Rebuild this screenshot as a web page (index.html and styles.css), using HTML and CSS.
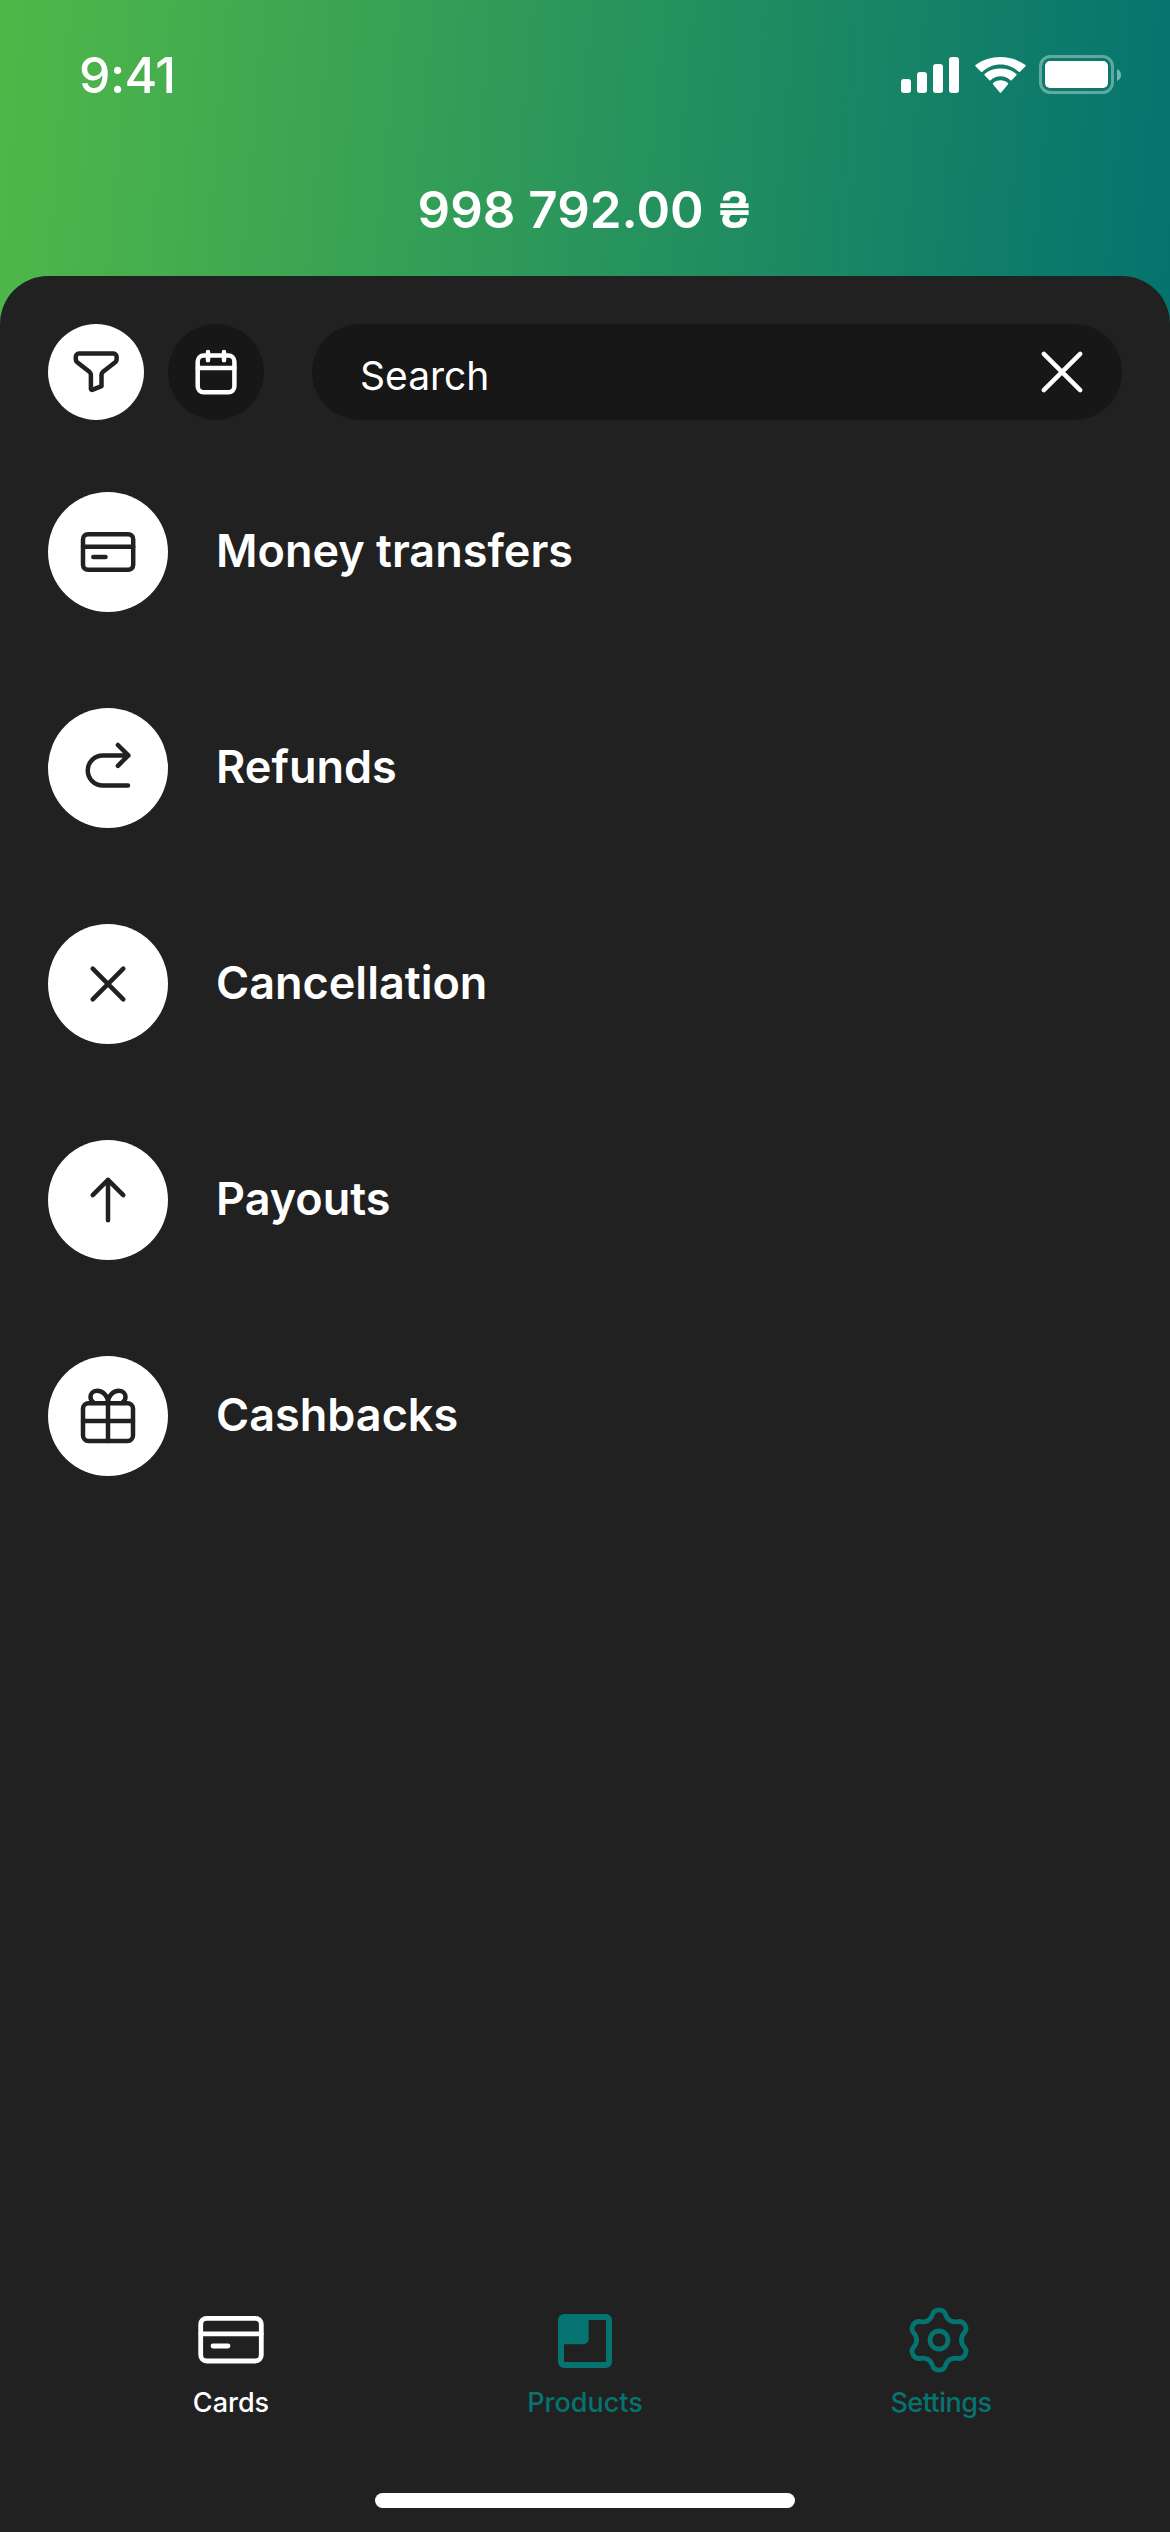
FILE: index.html
```html
<!DOCTYPE html>
<html lang="en">
<head>
<meta charset="utf-8">
<title>Products</title>
<link rel="stylesheet" href="styles.css">
</head>
<body>
<div class="screen">
  <header class="status-bar">
    <span class="time">9:41</span>
    <svg class="status-icons" width="222" height="40" viewBox="0 0 222 40" fill="#fff">
      <rect x="0" y="24" width="10" height="14" rx="3"/>
      <rect x="16" y="17" width="10" height="21" rx="3"/>
      <rect x="32" y="9" width="10" height="29" rx="3"/>
      <rect x="48" y="2" width="10" height="36" rx="3"/>
      <path d="M99.500 9.500c6.900 0 13.300 2.600 18.200 7.300.4.300.9.300 1.300 0l5.500-5.500c.4-.4.400-1 0-1.400C117.500 5 108.700 2 99.500 2S81.500 5 74.500 9.900c-.4.400-.4 1 0 1.400l5.500 5.500c.4.300.9.300 1.300 0 4.900-4.700 11.300-7.300 18.200-7.300z"/>
      <path d="M99.500 21.300c3.700 0 7.200 1.400 9.900 3.900.4.400 1 .4 1.300 0l4.700-4.900c.4-.4.400-1 0-1.400-4.300-3.700-9.900-5.500-15.900-5.500s-11.600 1.800-15.900 5.500c-.4.400-.4 1 0 1.400l4.700 4.900c.3.400.9.400 1.300 0 2.700-2.500 6.200-3.900 9.900-3.900z"/>
      <path d="M106.900 29.400c.4-.4.400-1 0-1.300-2-1.800-4.600-2.800-7.400-2.800s-5.400 1-7.400 2.800c-.4.300-.4.900 0 1.300l6.700 8c.4.400 1 .4 1.400 0z"/>
      <rect x="139.500" y="1.500" width="72" height="36" rx="10" fill="none" stroke="#fff" stroke-width="3" opacity=".36"/>
      <path d="M216 14v12c2.500-1 4-3.300 4-6s-1.500-5-4-6z" opacity=".45"/>
      <rect x="144" y="6" width="63" height="27" rx="5"/>
    </svg>
  </header>
  <h1 class="balance">998 792.00 ₴</h1>

  <main class="sheet">
    <div class="toolbar">
      <button class="tool tool-active" aria-label="Filter">
        <svg class="line" width="96" height="96" viewBox="0 0 96 96"><path d="M30.800 29.600h34.800a3 3 0 0 1 3 3v2.600a4 4 0 0 1-1.400 3.100L54.700 48.100a3.500 3.500 0 0 0-1.200 2.600v11.500l-9.200 3.600a1 1 0 0 1-1.400-.9V50.700a3.500 3.500 0 0 0-1.200-2.600L29.200 38.300a4 4 0 0 1-1.400-3.100v-2.600a3 3 0 0 1 3-3z"/></svg>
      </button>
      <button class="tool" aria-label="Calendar">
        <svg class="line" width="96" height="96" viewBox="0 0 96 96"><rect x="29.700" y="31.600" width="36.700" height="36.700" rx="6"/><path d="M29.700 44h36.700M40 28v8.300M56 28v8.300"/></svg>
      </button>
      <div class="search">
        <span>Search</span>
        <svg class="line" width="48" height="48" viewBox="0 0 48 48"><path d="M5.800 5.800l36.400 36.400M42.200 5.800L5.800 42.200"/></svg>
      </div>
    </div>

    <ul class="categories">
      <li class="category">
        <span class="badge"><svg class="line" width="120" height="120" viewBox="0 0 120 120"><rect x="35" y="42.200" width="50.200" height="35.600" rx="5"/><path d="M35 54.800h50.200M45.300 65h12.200"/></svg></span>
        <span class="name">Money transfers</span>
      </li>
      <li class="category">
        <span class="badge"><svg class="line" width="120" height="120" viewBox="0 0 120 120"><path d="M80 77.500H54.800a15.050 15.050 0 0 1 0-30.100h25.700M69.900 37l10.400 10.400-10.400 10.400"/></svg></span>
        <span class="name">Refunds</span>
      </li>
      <li class="category">
        <span class="badge"><svg class="line" width="120" height="120" viewBox="0 0 120 120"><path d="M44.700 44.700l30.600 30.600M75.300 44.700L44.700 75.300"/></svg></span>
        <span class="name">Cancellation</span>
      </li>
      <li class="category">
        <span class="badge"><svg class="line" width="120" height="120" viewBox="0 0 120 120"><path d="M60 80.300V39.800M44.700 55.200L60 39.900l15.300 15.300"/></svg></span>
        <span class="name">Payouts</span>
      </li>
      <li class="category">
        <span class="badge"><svg class="line" width="120" height="120" viewBox="0 0 120 120"><rect x="35" y="47.300" width="50" height="37.700" rx="5.500"/><path d="M35 65h50M60 46v39M60 46.500C60 40 55 34.800 49 34.800c-4.200 0-6.500 3-6.500 6.200 0 3 1.400 4.800 3.500 6M60 46.500c0-6.500 5-11.700 11-11.700 4.200 0 6.500 3 6.500 6.200 0 3-1.400 4.800-3.500 6"/></svg></span>
        <span class="name">Cashbacks</span>
      </li>
    </ul>

    <nav class="tabs">
      <a class="tab tab-active">
        <svg class="tab-line" width="72" height="72" viewBox="0 0 72 72"><rect x="5.700" y="14.300" width="60.600" height="42.700" rx="6"/><path d="M5.700 29.800h60.600M18 42h15"/></svg>
        <span>Cards</span>
      </a>
      <a class="tab">
        <svg width="72" height="72" viewBox="0 0 72 72" fill="currentColor"><path fill-rule="evenodd" d="M15 10h42a6 6 0 0 1 6 6v42a6 6 0 0 1-6 6H15a6 6 0 0 1-6-6V16a6 6 0 0 1 6-6zm24.700 6v19.300a5 5 0 0 1-5 5H15V58h42V16z"/></svg>
        <span>Products</span>
      </a>
      <a class="tab">
        <svg class="tab-line" width="72" height="72" viewBox="0 0 72 72"><path d="M29.300 10.900A7 7 0 0 1 42.700 10.900A10 10 0 0 0 54.400 17.700A7 7 0 0 1 61.100 29.200A10 10 0 0 0 61.100 42.800A7 7 0 0 1 54.400 54.300A10 10 0 0 0 42.700 61.100A7 7 0 0 1 29.300 61.100A10 10 0 0 0 17.600 54.300A7 7 0 0 1 10.900 42.800A10 10 0 0 0 10.900 29.200A7 7 0 0 1 17.600 17.700A10 10 0 0 0 29.300 10.900Z"/><circle cx="36" cy="36" r="9"/></svg>
        <span class="settings-label">Settings</span>
      </a>
    </nav>
    <div class="home-indicator"></div>
  </main>
</div>
</body>
</html>
```
FILE: styles.css
```css
* {
  box-sizing: border-box;
  margin: 0;
  padding: 0;
}

body {
  font-family: Inter, "Liberation Sans", sans-serif;
  color: #fff;
}

svg {
  display: block;
  flex: none;
}

.screen {
  display: flex;
  flex-direction: column;
  width: 1170px;
  height: 2532px;
  background: linear-gradient(95deg, #50b848, #04736f) 0 0 / 100% 330px no-repeat #212121;
}

.status-bar {
  display: flex;
  justify-content: space-between;
  align-items: center;
  height: 150px;
  padding: 0 47px 0 79px;
}

.time {
  font-size: 50px;
  font-weight: 550;
  line-height: 60px;
  letter-spacing: -0.6px;
}

.balance {
  height: 126px;
  font-size: 51px;
  font-weight: 600;
  line-height: 120px;
  text-align: center;
}

.sheet {
  display: flex;
  flex: 1;
  flex-direction: column;
  padding-top: 48px;
  border-radius: 48px 48px 0 0;
  background: #212121;
}

.toolbar {
  display: flex;
  gap: 24px;
  padding: 0 48px;
}

.tool {
  width: 96px;
  height: 96px;
  border: 0;
  border-radius: 50%;
  background: #171717;
  color: #fff;
}

.tool-active {
  background: #fff;
  color: #212121;
}

.line,
.tab-line {
  fill: none;
  stroke: currentColor;
  stroke-width: 4.5;
  stroke-linecap: round;
  stroke-linejoin: round;
}

.tab-line {
  stroke-width: 4.8;
}

.search {
  display: flex;
  flex: 1;
  justify-content: space-between;
  align-items: center;
  height: 96px;
  margin-left: 24px;
  padding: 0 36px 0 48px;
  border-radius: 48px;
  background: #171717;
  font-size: 39px;
  line-height: 48px;
}

.search span {
  padding-top: 8px;
}

.categories {
  display: flex;
  flex-direction: column;
  gap: 96px;
  padding: 72px 48px 0;
  list-style: none;
}

.category {
  display: flex;
  align-items: center;
  gap: 48px;
  font-size: 45px;
  font-weight: 600;
  line-height: 54px;
}

.name {
  padding-bottom: 2px;
}

.badge {
  width: 120px;
  height: 120px;
  border-radius: 50%;
  background: #fff;
  color: #212121;
}

.tabs {
  display: grid;
  grid-template-columns: repeat(3, 1fr);
  margin-top: auto;
  padding: 0 54px;
}

.tab {
  display: flex;
  flex-direction: column;
  align-items: center;
  gap: 9px;
  color: #05736f;
  font-size: 27px;
  font-weight: 500;
  line-height: 36px;
}

.tab-active {
  color: #fff;
}

.settings-label {
  padding-left: 4px;
  letter-spacing: -0.5px;
}

.home-indicator {
  width: 420px;
  height: 15px;
  margin: 72px auto 24px;
  border-radius: 8px;
  background: #fff;
}
```
